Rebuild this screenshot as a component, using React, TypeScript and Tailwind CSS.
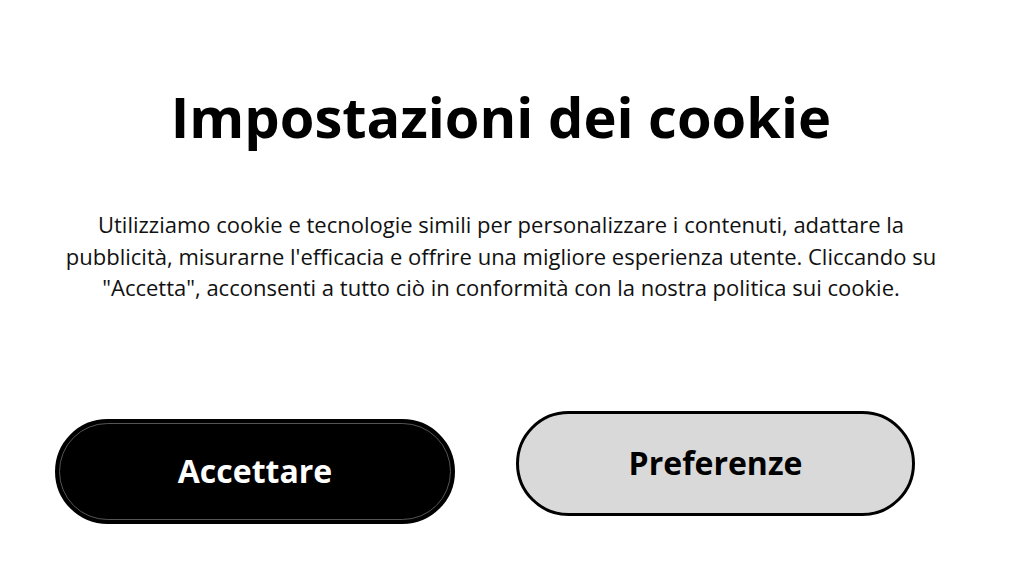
import React from "react";

export default function App() {
  return (
    <div className="w-[1024px] h-[576px] bg-white overflow-hidden relative" style={{ fontFamily: '"Open Sans", sans-serif' }}>
      <div className="flex flex-col items-center pr-[22px]">
        <h1 className="mt-[76px] text-[56px] leading-[80px] font-bold text-black">Impostazioni dei cookie</h1>
        <p className="mt-[53px] w-full text-center text-[22px] leading-[31.5px] text-[#111]">
          Utilizziamo cookie e tecnologie simili per personalizzare i contenuti, adattare la
          <br />
          pubblicità, misurarne l'efficacia e offrire una migliore esperienza utente. Cliccando su
          <br />
          "Accetta", acconsenti a tutto ciò in conformità con la nostra politica sui cookie.
        </p>
      </div>
      <div className="flex justify-between pl-[55px] pr-[109px] mt-[107px]">
        <div className="mt-[8px] w-[400px] h-[105px] rounded-full bg-black border-[3px] border-black outline outline-1 outline-[#555] -outline-offset-[5px] flex items-center justify-center">
          <span className="text-white font-bold text-[32px]">Accettare</span>
        </div>
        <div className="w-[399px] h-[105px] rounded-full bg-[#d9d9d9] border-[3px] border-black flex items-center justify-center">
          <span className="text-black font-bold text-[32px]">Preferenze</span>
        </div>
      </div>
    </div>
  );
}
